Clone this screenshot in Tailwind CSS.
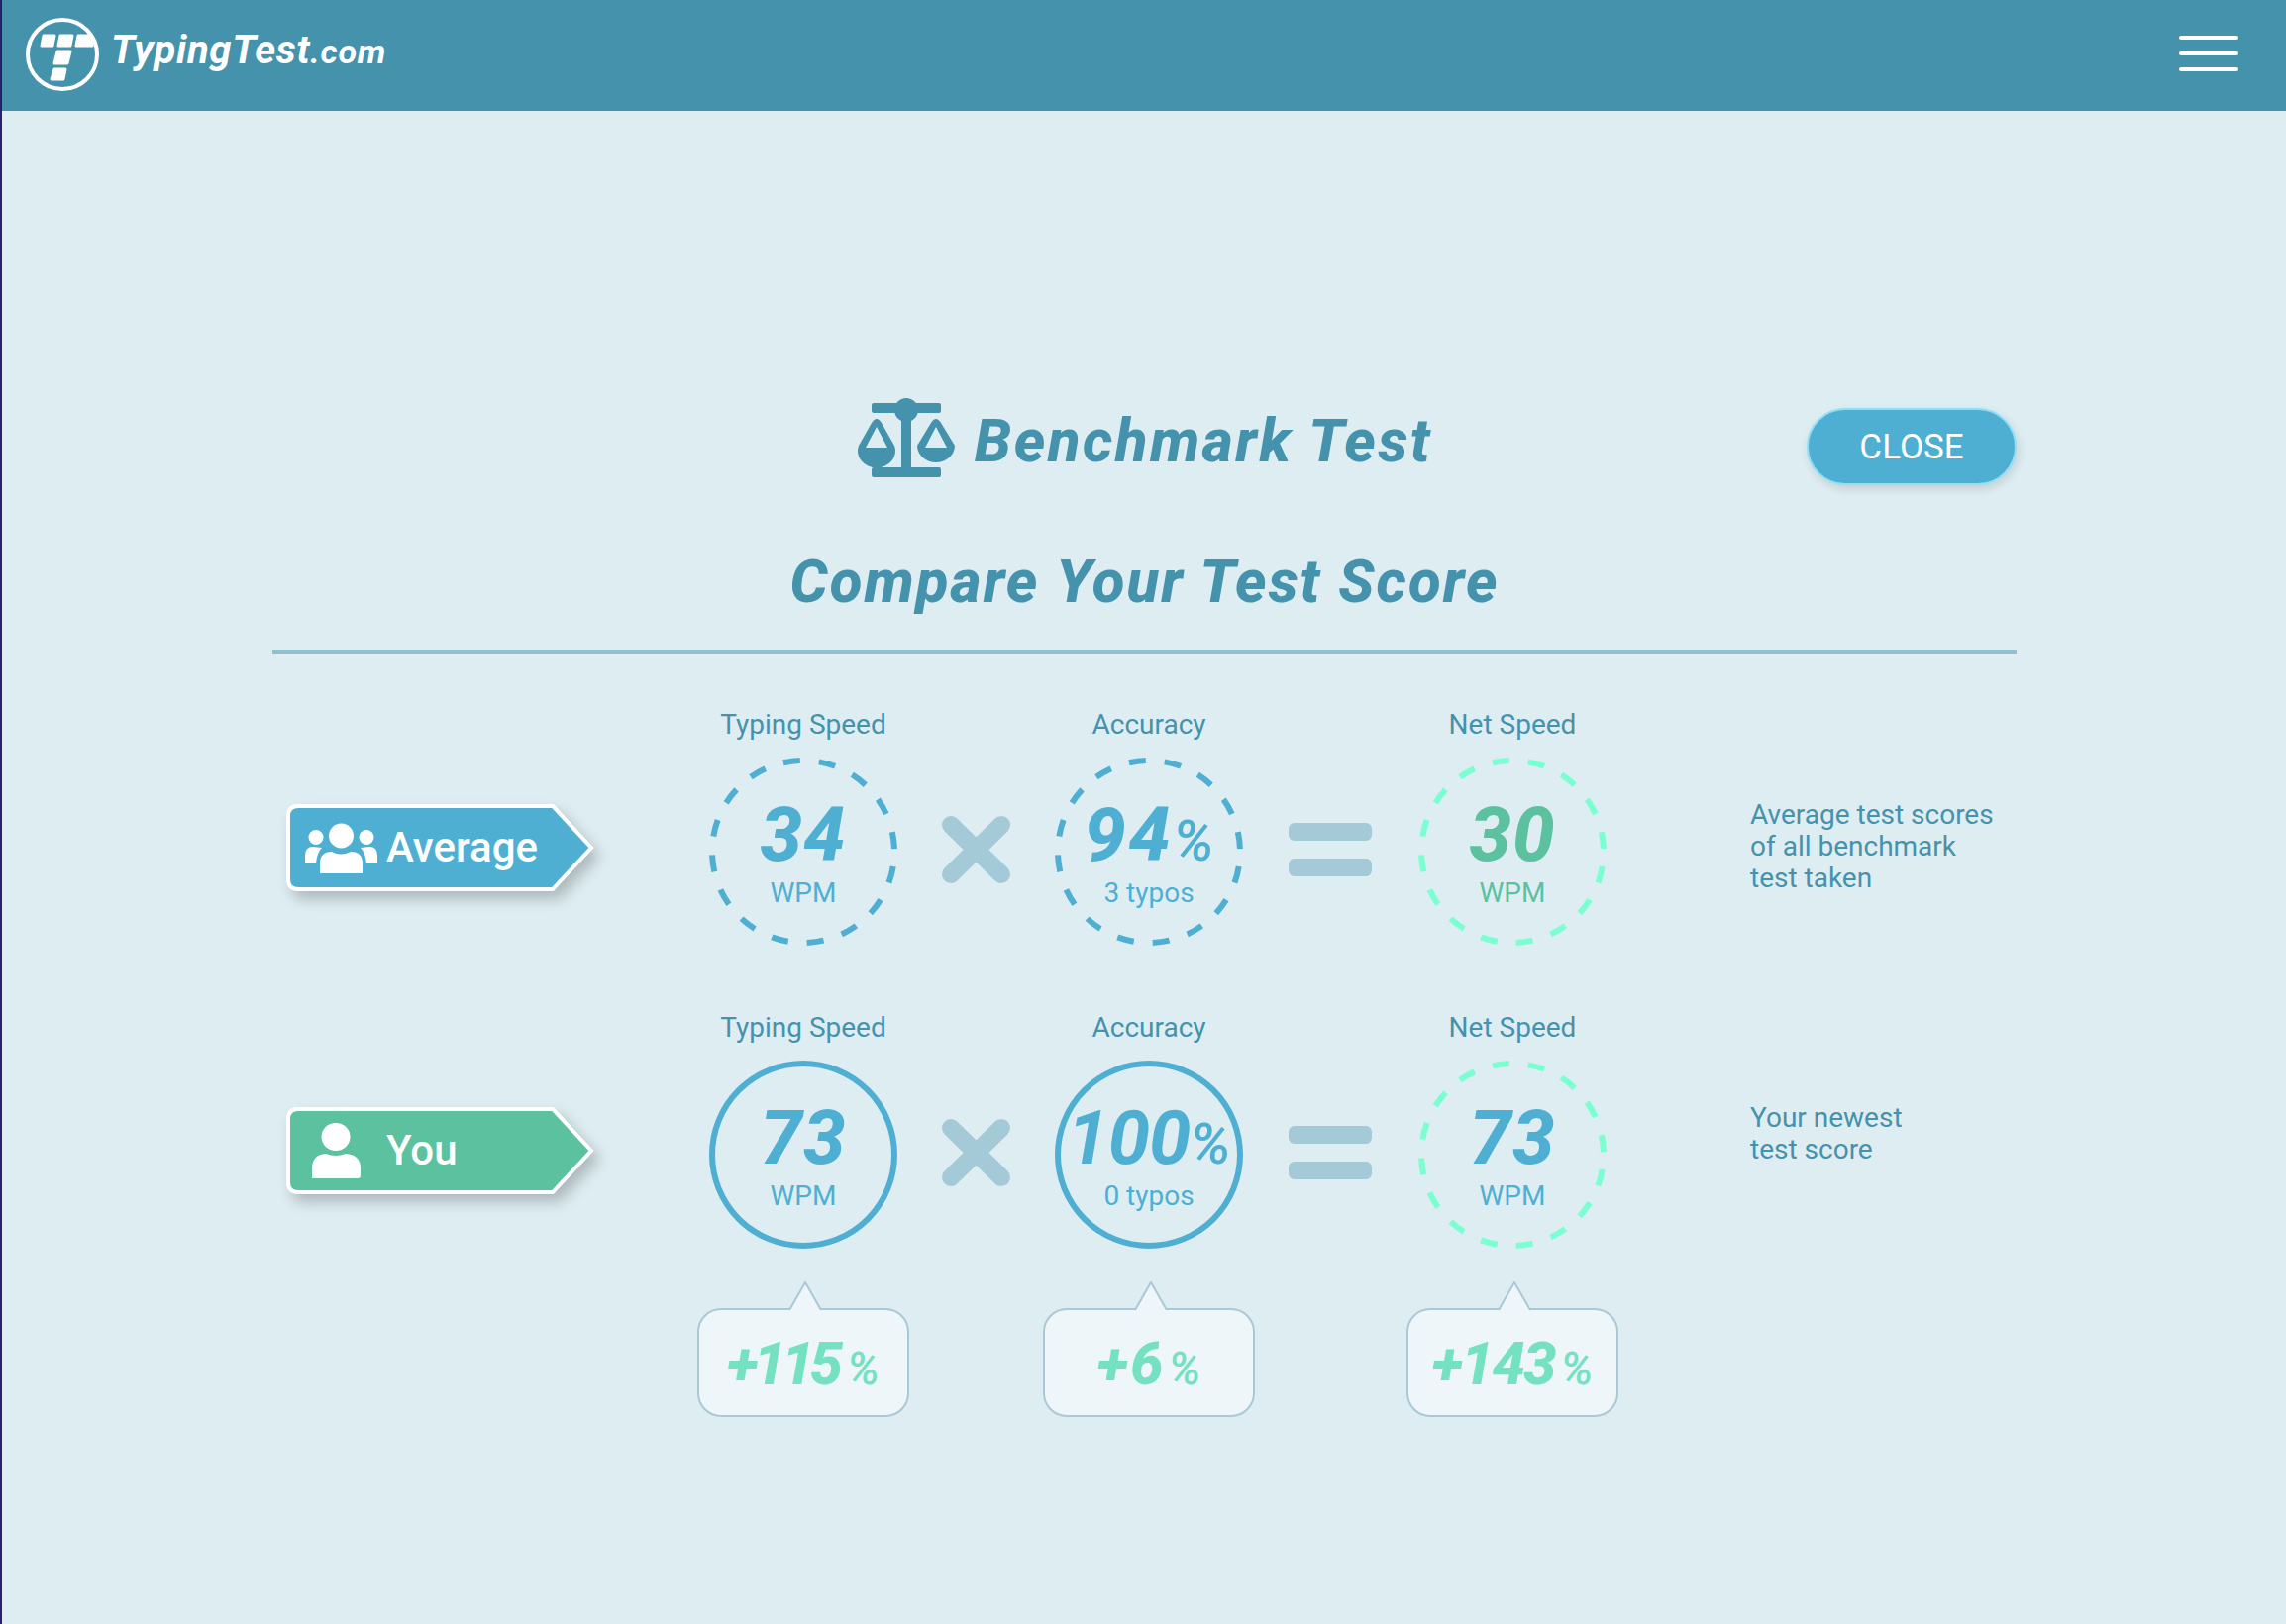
<!DOCTYPE html>
<html lang="en">
<head>
    <meta charset="UTF-8">
    <title>Benchmark Test - TypingTest.com</title>
    <script src="https://cdn.jsdelivr.net/npm/@tailwindcss/browser@4"></script>
</head>
<body class="bg-[#deedf2] font-[Roboto,sans-serif]">
<div class="w-[2308px] h-[1640px] overflow-hidden border-l-2 border-[#2a1f6b]">

    <!-- Navbar -->
    <nav class="h-[112px] bg-[#4592ac] flex items-center justify-between pl-[23px] pr-[48px]">
        <a href="#" class="flex items-center gap-[11px] text-white italic font-bold">
            <svg width="76" height="76" viewBox="0 0 76 76" class="-mt-[2px]">
                <circle cx="38" cy="38" r="35" fill="none" stroke="white" stroke-width="4"/>
                <g fill="white" stroke="white" stroke-width="3" stroke-linejoin="round">
                    <polygon points="19,19 30,19 28,29 17,29"/>
                    <polygon points="36,19 48,19 46,29 34,29"/>
                    <polygon points="54,19 66,19 68,29 52,29"/>
                    <polygon points="33,35 46,35 43,47 30,47"/>
                    <polygon points="30,53 41,53 39,63 27,63"/>
                </g>
            </svg>
            <span class="text-[40px] leading-[48px] -mt-[10px] tracking-[0.7px]">TypingTest<span class="text-[34px]">.com</span></span>
        </a>
        <div class="w-[60px] flex flex-col gap-[12px] -mt-[4px]">
            <div class="h-[4px] rounded-full bg-white"></div>
            <div class="h-[4px] rounded-full bg-white"></div>
            <div class="h-[4px] rounded-full bg-white"></div>
        </div>
    </nav>

    <main class="pl-[273px] w-[2034px] pt-[288px]">
        <!-- Title -->
        <div class="grid grid-cols-[1fr_auto_1fr] h-[90px]">
            <div></div>
            <div class="flex gap-[18px]">
                <svg width="101" height="84" viewBox="0 0 101 84" fill="#4592ac">
                    <rect x="15" y="7" width="70" height="10" rx="2"/>
                    <circle cx="50" cy="14" r="12"/>
                    <rect x="45" y="14" width="10" height="60"/>
                    <rect x="15" y="72" width="70" height="10" rx="2"/>
                    <path fill-rule="evenodd" d="M15 27 Q20 19 25 27 L38 50 A19 17 0 1 1 2 50 Z M20 31 L9 52 L31 52 Z"/>
                    <path fill-rule="evenodd" d="M75 27 Q80 19 85 27 L99 50 A19 17 0 1 1 61 50 Z M80 31 L69 52 L91 52 Z"/>
                </svg>
                <h1 class="mt-[10px] text-[60px] leading-[72px] font-extrabold italic text-[#4592ac] whitespace-nowrap tracking-[2.5px]">Benchmark Test</h1>
            </div>
            <div class="flex justify-end items-end">
                <button class="w-[212px] h-[78px] pt-[2px] rounded-full bg-[#4fafd2] border-2 border-[#8fdff5] shadow-[2px_4px_10px_rgba(0,0,0,0.12)] text-white text-[35px]">CLOSE</button>
            </div>
        </div>

        <h2 class="mt-[62px] text-center text-[60px] leading-[72px] font-extrabold italic text-[#4592ac] tracking-[2.05px]">Compare Your Test Score</h2>
        <div class="mt-[32px] h-[4px] bg-[#8fc1d1]"></div>

        <!-- Average row -->
        <div class="mt-[56px] grid grid-cols-[429px_214px_135px_214px_153px_214px_133px_1fr] text-[28px] leading-[32px] text-[#4592ac]">
            <div class="pl-[14px] pt-[96px]">
                <div class="relative w-[310px] h-[88px]">
                    <svg width="310" height="88" viewBox="0 0 310 88" class="absolute inset-0 overflow-visible drop-shadow-[6px_8px_7px_rgba(0,0,0,0.22)]">
                        <path d="M12 2 H269 L308 44 L269 86 H12 Q2 86 2 76 V12 Q2 2 12 2 Z" fill="#4fafd2" stroke="white" stroke-width="4"/>
                        <g fill="white">
                            <circle cx="55.5" cy="32" r="12.5"/>
                            <path d="M34 70 V60 Q34 48 46 48 Q55 53 65 48 Q77 48 77 60 V70 Z"/>
                            <circle cx="30" cy="33.5" r="7.5"/>
                            <path d="M19 60 V52 Q19 43 27 43 L36 44 Q31 49 30 60 Z"/>
                            <circle cx="81" cy="33.5" r="7.5"/>
                            <path d="M92 60 V52 Q92 43 84 43 L75 44 Q80 49 81 60 Z"/>
                        </g>
                    </svg>
                    <span class="absolute left-[101px] top-[19px] text-white text-[42px] leading-[50px] font-medium">Average</span>
                </div>
            </div>
            <div class="flex flex-col items-center">
                <div>Typing Speed</div>
                <div class="relative mt-[17px] w-[190px] h-[190px] flex flex-col items-center pt-[48px] text-[#4fafd2]">
                    <svg width="190" height="190" class="absolute inset-0"><circle cx="95" cy="95" r="92" fill="none" stroke="#4fafd2" stroke-width="6" stroke-dasharray="17 19.13" stroke-dashoffset="21"/></svg>
                    <div class="text-[76px] leading-[60px] font-extrabold italic tracking-[1px]">34</div>
                    <div class="mt-[13px]">WPM</div>
                </div>
            </div>
            <div class="flex justify-center pt-[108px]">
                <svg width="69" height="68" viewBox="0 0 69 68"><path d="M9 9 L60 59 M60 9 L9 59" stroke="#a4c9d7" stroke-width="18" stroke-linecap="round"/></svg>
            </div>
            <div class="flex flex-col items-center">
                <div>Accuracy</div>
                <div class="relative mt-[17px] w-[190px] h-[190px] flex flex-col items-center pt-[48px] text-[#4fafd2]">
                    <svg width="190" height="190" class="absolute inset-0"><circle cx="95" cy="95" r="92" fill="none" stroke="#4fafd2" stroke-width="6" stroke-dasharray="17 19.13" stroke-dashoffset="21"/></svg>
                    <div class="text-[76px] leading-[60px] font-extrabold italic whitespace-nowrap tracking-[2.5px]">94<span class="text-[58px] leading-[20px] font-medium tracking-normal">%</span></div>
                    <div class="mt-[13px]">3 typos</div>
                </div>
            </div>
            <div class="flex flex-col items-center gap-[18px] pt-[115px] pr-[2px]">
                <div class="w-[84px] h-[18px] rounded-[6px] bg-[#a4c9d7]"></div>
                <div class="w-[84px] h-[18px] rounded-[6px] bg-[#a4c9d7]"></div>
            </div>
            <div class="flex flex-col items-center">
                <div>Net Speed</div>
                <div class="relative mt-[17px] w-[190px] h-[190px] flex flex-col items-center pt-[48px] text-[#5cc19f]">
                    <svg width="190" height="190" class="absolute inset-0"><circle cx="95" cy="95" r="92" fill="none" stroke="#7affd0" stroke-width="6" stroke-dasharray="17 19.13" stroke-dashoffset="21"/></svg>
                    <div class="text-[76px] leading-[60px] font-extrabold italic tracking-[1px]">30</div>
                    <div class="mt-[13px]">WPM</div>
                </div>
            </div>
            <div></div>
            <div class="pt-[91px] whitespace-nowrap">Average test scores<br>of all benchmark<br>test taken</div>
        </div>

        <!-- You row -->
        <div class="mt-[67px] grid grid-cols-[429px_214px_135px_214px_153px_214px_133px_1fr] text-[28px] leading-[32px] text-[#4592ac]">
            <div class="pl-[14px] pt-[96px]">
                <div class="relative w-[310px] h-[88px]">
                    <svg width="310" height="88" viewBox="0 0 310 88" class="absolute inset-0 overflow-visible drop-shadow-[6px_8px_7px_rgba(0,0,0,0.22)]">
                        <path d="M12 2 H269 L308 44 L269 86 H12 Q2 86 2 76 V12 Q2 2 12 2 Z" fill="#5cc19f" stroke="white" stroke-width="4"/>
                        <g fill="white">
                            <ellipse cx="50" cy="30" rx="14.5" ry="14"/>
                            <path d="M26 72 V62 Q26 48 40 47 Q50 51 60 47 Q75 48 75 62 V69 Q75 72 72 72 Z"/>
                        </g>
                    </svg>
                    <span class="absolute left-[101px] top-[19px] text-white text-[42px] leading-[50px] font-medium">You</span>
                </div>
            </div>
            <div class="flex flex-col items-center">
                <div>Typing Speed</div>
                <div class="mt-[17px] w-[190px] h-[190px] rounded-full border-[6px] border-[#4fafd2] flex flex-col items-center pt-[42px] text-[#4fafd2]">
                    <div class="text-[76px] leading-[60px] font-extrabold italic tracking-[1px]">73</div>
                    <div class="mt-[13px]">WPM</div>
                </div>
            </div>
            <div class="flex justify-center pt-[108px]">
                <svg width="69" height="68" viewBox="0 0 69 68"><path d="M9 9 L60 59 M60 9 L9 59" stroke="#a4c9d7" stroke-width="18" stroke-linecap="round"/></svg>
            </div>
            <div class="flex flex-col items-center">
                <div>Accuracy</div>
                <div class="mt-[17px] w-[190px] h-[190px] rounded-full border-[6px] border-[#4fafd2] flex flex-col items-center pt-[42px] text-[#4fafd2]">
                    <div class="text-[76px] leading-[60px] font-bold italic whitespace-nowrap tracking-[-1px]">100<span class="text-[58px] leading-[20px] font-medium tracking-normal">%</span></div>
                    <div class="mt-[13px]">0 typos</div>
                </div>
            </div>
            <div class="flex flex-col items-center gap-[18px] pt-[115px] pr-[2px]">
                <div class="w-[84px] h-[18px] rounded-[6px] bg-[#a4c9d7]"></div>
                <div class="w-[84px] h-[18px] rounded-[6px] bg-[#a4c9d7]"></div>
            </div>
            <div class="flex flex-col items-center">
                <div>Net Speed</div>
                <div class="relative mt-[17px] w-[190px] h-[190px] flex flex-col items-center pt-[48px] text-[#4fafd2]">
                    <svg width="190" height="190" class="absolute inset-0"><circle cx="95" cy="95" r="92" fill="none" stroke="#7affd0" stroke-width="6" stroke-dasharray="17 19.13" stroke-dashoffset="21"/></svg>
                    <div class="text-[76px] leading-[60px] font-extrabold italic tracking-[1px]">73</div>
                    <div class="mt-[13px]">WPM</div>
                </div>
            </div>
            <div></div>
            <div class="pt-[91px] whitespace-nowrap">Your newest<br>test score</div>
        </div>

        <!-- Difference callouts -->
        <div class="mt-[60px] grid grid-cols-[429px_214px_135px_214px_153px_214px_133px_1fr] text-[#74e2c0] italic font-extrabold">
            <div></div>
            <div class="relative h-[110px] rounded-[24px] border-2 border-[#a9c9d6] bg-[#eef6fa] pt-[25px] text-center text-[60px] leading-[60px] tracking-[-5px]">
                <svg width="34" height="30" viewBox="0 0 34 30" class="absolute left-[90px] -top-[29px]"><path d="M1 29 L17 1 L33 29" fill="#eef6fa" stroke="#a9c9d6" stroke-width="2"/></svg>
                +115<span class="text-[46px] leading-[20px] font-medium tracking-normal ml-[9px]">%</span>
            </div>
            <div></div>
            <div class="relative h-[110px] rounded-[24px] border-2 border-[#a9c9d6] bg-[#eef6fa] pt-[25px] text-center text-[60px] leading-[60px] tracking-[2px]">
                <svg width="34" height="30" viewBox="0 0 34 30" class="absolute left-[90px] -top-[29px]"><path d="M1 29 L17 1 L33 29" fill="#eef6fa" stroke="#a9c9d6" stroke-width="2"/></svg>
                +6<span class="text-[46px] leading-[20px] font-medium tracking-normal ml-[3px]">%</span>
            </div>
            <div></div>
            <div class="relative h-[110px] rounded-[24px] border-2 border-[#a9c9d6] bg-[#eef6fa] pt-[25px] text-center text-[60px] leading-[60px] tracking-[-2px]">
                <svg width="34" height="30" viewBox="0 0 34 30" class="absolute left-[90px] -top-[29px]"><path d="M1 29 L17 1 L33 29" fill="#eef6fa" stroke="#a9c9d6" stroke-width="2"/></svg>
                +143<span class="text-[46px] leading-[20px] font-medium tracking-normal ml-[6px]">%</span>
            </div>
        </div>
    </main>
</div>
</body>
</html>
